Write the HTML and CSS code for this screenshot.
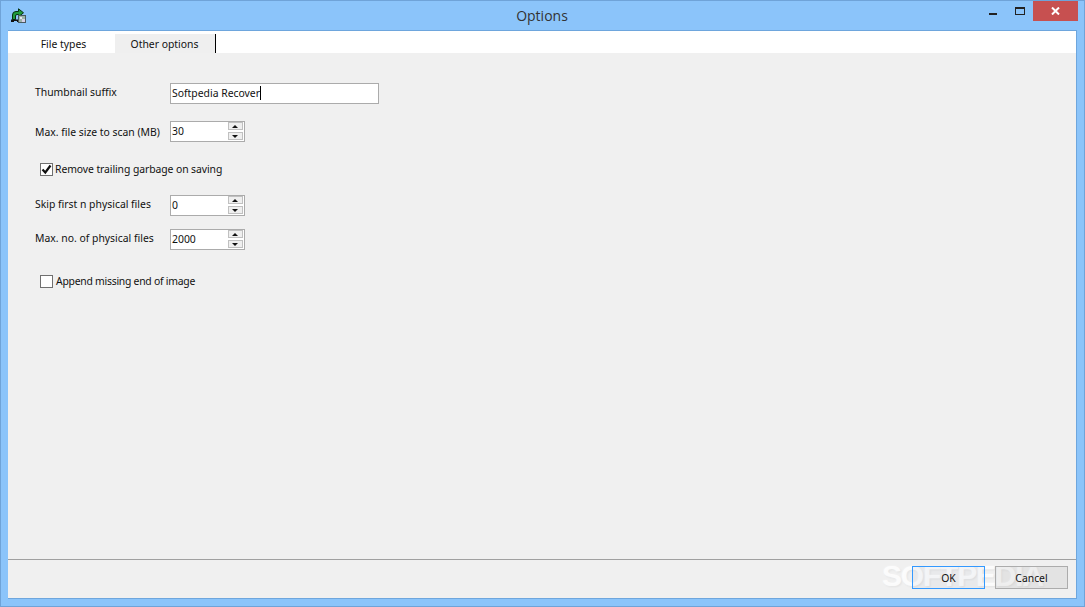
FILE: index.html
```html
<!DOCTYPE html>
<html lang="en">
<head>
<meta charset="utf-8">
<title>Options</title>
<link rel="stylesheet" href="styles.css">
</head>
<body>
<div class="window">
  <header class="titlebar">
    <svg class="app-icon" width="16" height="16" viewBox="0 0 16 16">
      <path d="M1.5 11.5 V7 Q1.5 3.5 5 3.5 H7.5 V0.8 L12.5 4.8 L7.5 8.8 V6.5 H6 Q4.5 6.5 4.5 8 V11.5 Z" fill="#1f9a3c" stroke="#06300f" stroke-width="1"/>
      <path d="M0 11.5 H8 V14 H6 V13 H3 V14 H0 Z" fill="#111"/>
      <rect x="7.5" y="7.5" width="7" height="7" fill="#9cb4a8" stroke="#4a5a60" stroke-width="1"/>
      <rect x="9" y="9" width="2" height="2" fill="#e6e6f0"/>
      <rect x="11" y="11" width="3" height="3" fill="#d8d0e8"/>
    </svg>
    <div class="title">Options</div>
    <div class="controls">
      <div class="ctl"><span class="min"></span></div>
      <div class="ctl"><span class="max"></span></div>
      <div class="close">
        <svg width="9" height="8" viewBox="0 0 9 8"><path d="M1 0.5 L8 7.5 M8 0.5 L1 7.5" stroke="#fff" stroke-width="2"/></svg>
      </div>
    </div>
  </header>
  <main class="client">
    <nav class="tabs">
      <div class="tab tab-types">File types</div>
      <div class="tab tab-other">Other options</div>
    </nav>
    <section class="panel">
      <div class="row row-suffix">
        <label class="lbl lift5">Thumbnail suffix</label>
        <div class="input wide">Softpedia Recover<span class="caret"></span></div>
      </div>
      <div class="row row-size">
        <label class="lbl">Max. file size to scan (MB)</label>
        <div class="input spin"><span class="val">30</span><span class="arrows"><i class="up"></i><i class="down"></i></span></div>
      </div>
      <div class="check row-remove">
        <span class="box"><svg width="11" height="11" viewBox="0 0 11 11"><path d="M1.5 5.5 L4.3 8.5 L9.5 1.5" fill="none" stroke="#111" stroke-width="2.2"/></svg></span>
        <span class="check-text">Remove trailing garbage on saving</span>
      </div>
      <div class="row row-skip">
        <label class="lbl lift4">Skip first n physical files</label>
        <div class="input spin"><span class="val">0</span><span class="arrows"><i class="up"></i><i class="down"></i></span></div>
      </div>
      <div class="row row-max">
        <label class="lbl lift3">Max. no. of physical files</label>
        <div class="input spin"><span class="val">2000</span><span class="arrows"><i class="up"></i><i class="down"></i></span></div>
      </div>
      <div class="check row-append">
        <span class="box"></span>
        <span class="check-text tight">Append missing end of image</span>
      </div>
    </section>
    <div class="watermark">SOFTPEDIA</div>
    <footer class="footer">
      <button class="btn ok">OK</button>
      <button class="btn">Cancel</button>
    </footer>
  </main>
</div>
</body>
</html>
```

FILE: styles.css
```css
* { box-sizing: border-box; }
html, body { margin: 0; height: 100%; }
body {
  font-family: "Noto Sans", sans-serif;
  font-size: 10.4px;
  color: #111;
  overflow: hidden;
}
.window {
  width: 1085px;
  height: 607px;
  background: #8bc4fa;
  border: 1px solid #6fa3d8;
  padding: 0 7px 7px;
  display: flex;
  flex-direction: column;
}
.titlebar {
  height: 29px;
  display: flex;
  align-items: flex-start;
  flex: none;
  position: relative;
}
.app-icon { margin: 7px 0 0 3px; }
.title {
  position: absolute;
  left: -1px; right: 0; top: 6px;
  text-align: center;
  font-family: "Open Sans", sans-serif;
  font-size: 14px;
  line-height: 18px;
  color: #333;
}
.controls {
  margin-left: auto;
  display: flex;
  margin-right: -1px;
}
.ctl { width: 30px; height: 20px; position: relative; }
.min { position: absolute; left: 17px; top: 12px; width: 8px; height: 2px; background: #222; }
.max { position: absolute; left: 13px; top: 6px; width: 10px; height: 8px; border: 1px solid #222; border-top-width: 2px; }
.close {
  width: 45px;
  height: 20px;
  margin-left: 1px;
  background: #c75050;
  display: flex;
  align-items: center;
  justify-content: center;
}
.client {
  flex: 1;
  background: #f0f0f0;
  border: 1px solid #6ea6dd;
  border-left-width: 0;
  display: flex;
  flex-direction: column;
  position: relative;
}
.tabs {
  height: 22px;
  background: #fff;
  display: flex;
  align-items: flex-end;
  flex: none;
}
.tab { height: 19px; line-height: 21px; text-align: center; }
.tab-types { width: 107px; padding-left: 4px; }
.tab-other { width: 101px; background: #efefef; border-right: 1px solid #000; padding-right: 1px; }
.panel { flex: 1; padding-left: 27px; display: flex; flex-direction: column; }
.row { display: flex; align-items: center; }
.lbl { width: 135px; flex: none; }
.lift5 { margin-bottom: 4px; }
.lift4 { margin-bottom: 4px; }
.lift3 { margin-bottom: 3px; }
.row-suffix { margin-top: 30px; }
.row-size { margin-top: 17px; }
.row-skip { margin-top: 19px; }
.row-max { margin-top: 13px; }
.input {
  height: 21px;
  background: #fff;
  border: 1px solid #ababab;
  display: flex;
  align-items: center;
  padding: 0 0 1px 1px;
}
.wide { width: 209px; padding-bottom: 2px; }
.caret { display: inline-block; width: 1px; height: 14px; background: #000; }
.spin { width: 75px; position: relative; }
.val { flex: 1; }
.arrows { width: 15px; height: 18px; display: flex; flex-direction: column; gap: 2px; margin-right: 1px; }
.arrows i { flex: 1; background: #efefef; border: 1px solid #c0c0c0; position: relative; display: block; }
.up::after, .down::after {
  content: ""; position: absolute; left: 3px; top: 2px;
  border-left: 3.5px solid transparent; border-right: 3.5px solid transparent;
}
.up::after { border-bottom: 3px solid #111; }
.down::after { border-top: 3px solid #111; }
.check { display: flex; align-items: center; gap: 2px; margin-left: 5px; height: 13px; }
.check-text { margin-bottom: 1px; letter-spacing: -0.08px; }
.tight { letter-spacing: -0.25px; margin-left: 1px; }
.row-remove { margin-top: 21px; }
.row-append { margin-top: 25px; }
.box {
  width: 13px; height: 13px; background: #fff; border: 1px solid #707070;
  display: flex; align-items: center; justify-content: center; flex: none;
}
.footer {
  height: 39px;
  flex: none;
  border-top: 1px solid #a0a0a0;
  display: flex;
  justify-content: flex-end;
  gap: 10px;
  padding: 6px 8px 0 0;
  position: relative;
  z-index: 1;
}
.btn {
  width: 73px;
  height: 23px;
  background: rgba(0,0,0,.05);
  border: 1px solid #acacac;
  font: inherit;
  color: #111;
  padding: 0;
}
.ok { border-color: #3399ff; background: rgba(0,40,80,.03); }
.watermark {
  position: absolute;
  left: 874px;
  top: 527px;
  font-family: "Liberation Sans", sans-serif;
  font-weight: 700;
  font-size: 30px;
  line-height: 36px;
  letter-spacing: -1.2px;
  color: rgba(255,255,255,.75);
  text-shadow: 0 0 2px rgba(255,255,255,.6), 1px 1px 2px rgba(0,0,0,.07);
  pointer-events: none;
}
```
